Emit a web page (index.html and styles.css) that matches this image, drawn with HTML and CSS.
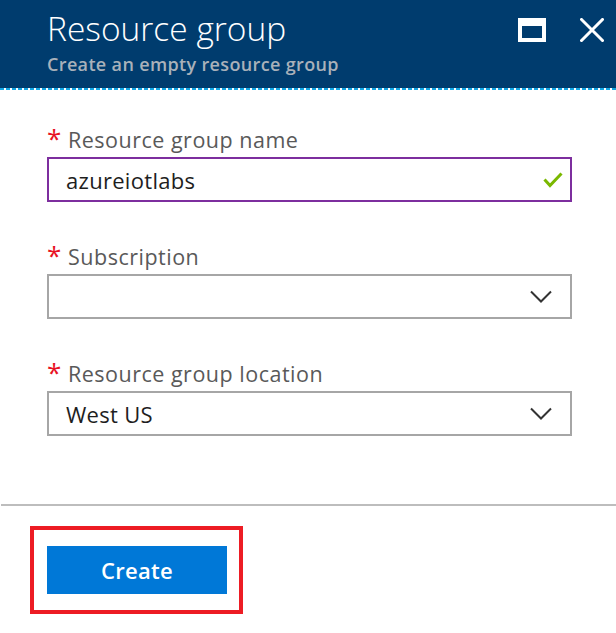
FILE: index.html
```html
<!DOCTYPE html>
<html>
<head>
<meta charset="utf-8">
<link rel="stylesheet" href="styles.css">
</head>
<body>
<div class="blade">
  <header class="header">
    <div class="titles">
      <h1 class="title">Resource group</h1>
      <p class="subtitle">Create an empty resource group</p>
    </div>
    <div class="actions">
      <svg class="icon-max" width="28" height="24" viewBox="0 0 28 24"><path d="M0 0H28V24H0Z M4 8V20H24V8Z" fill="#fff" fill-rule="evenodd"/></svg>
      <svg class="icon-close" width="24" height="24" viewBox="0 0 24 24"><path d="M1.5 1.5L22.5 22.5M22.5 1.5L1.5 22.5" stroke="#fff" stroke-width="3" stroke-linecap="square"/></svg>
    </div>
  </header>
  <div class="dots"></div>
  <form class="form">
    <div class="field">
      <label class="label"><span class="req">*</span>Resource group name</label>
      <div class="input input-valid">
        <span class="value">azureiotlabs</span>
        <svg class="check" width="20" height="16" viewBox="0 0 20 16"><path d="M1.5 7.5L7 13.5L18.5 1.5" stroke="#7ab800" stroke-width="3" fill="none"/></svg>
      </div>
    </div>
    <div class="field">
      <label class="label"><span class="req">*</span>Subscription</label>
      <div class="input">
        <span class="value"></span>
        <svg class="chev" width="22" height="13" viewBox="0 0 22 13"><path d="M1 1.5L11 11.5L21 1.5" stroke="#333" stroke-width="2" fill="none"/></svg>
      </div>
    </div>
    <div class="field">
      <label class="label"><span class="req">*</span>Resource group location</label>
      <div class="input">
        <span class="value">West US</span>
        <svg class="chev" width="22" height="13" viewBox="0 0 22 13"><path d="M1 1.5L11 11.5L21 1.5" stroke="#333" stroke-width="2" fill="none"/></svg>
      </div>
    </div>
  </form>
  <div class="divider"></div>
  <div class="footer">
    <div class="highlight">
      <button class="btn" type="button">Create</button>
    </div>
  </div>
</div>
</body>
</html>
```

FILE: styles.css
```css
html, body {
  margin: 0;
  padding: 0;
  background: #fff;
}
body {
  font-family: "Open Sans", "Noto Sans", sans-serif;
  width: 616px;
  height: 633px;
  overflow: hidden;
}
.header {
  background: #003c6e;
  height: 88px;
  display: flex;
  justify-content: space-between;
  padding: 0 12px 0 47px;
  box-sizing: border-box;
}
.title {
  margin: 0;
  padding-top: 8px;
  font-size: 33.5px;
  font-weight: 300;
  color: #fff;
  line-height: 40px;
}
.subtitle {
  margin: 4px 0 0;
  font-size: 18px;
  font-weight: 600;
  color: #a9b1ba;
  line-height: 24px;
  letter-spacing: 0.35px;
}
.actions {
  display: flex;
  align-items: flex-start;
  gap: 34px;
  padding-top: 18px;
}
.dots {
  height: 2px;
  background: repeating-linear-gradient(to right, #13a6e3 0 4px, transparent 4px 6px);
}
.form {
  padding: 36px 44px 0 47px;
  display: flex;
  flex-direction: column;
  gap: 41px;
}
.field {
  display: flex;
  flex-direction: column;
  gap: 3px;
}
.label {
  font-size: 21.5px;
  color: #595959;
  line-height: 28px;
  display: flex;
  letter-spacing: 0.5px;
}
.req {
  color: #e81123;
  font-size: 26px;
  line-height: 28px;
  width: 21px;
  font-weight: 400;
  letter-spacing: 0;
  position: relative;
  top: -2px;
}
.input {
  height: 45px;
  box-sizing: border-box;
  border: 2px solid #a6a6a6;
  display: flex;
  align-items: center;
  justify-content: space-between;
  padding: 0 18px 0 17px;
}
.input-valid {
  border-color: #7d2e9e;
  padding-right: 7px;
}
.value {
  font-size: 22px;
  color: #1e1e1e;
  letter-spacing: 0.3px;
}
.divider {
  margin-top: 68px;
  height: 2px;
  background: #bdbdbd;
  margin-left: 1px;
}
.footer {
  padding: 20px 0 0 30px;
}
.highlight {
  display: inline-block;
  border: 4px solid #ed1c24;
  padding: 16px 12px 16px 13px;
}
.btn {
  display: block;
  width: 180px;
  height: 48px;
  border: 0;
  background: #0078d7;
  color: #fff;
  font-family: "Open Sans", "Noto Sans", sans-serif;
  font-size: 22px;
  font-weight: 600;
  letter-spacing: 0.3px;
  padding: 0;
}
```
